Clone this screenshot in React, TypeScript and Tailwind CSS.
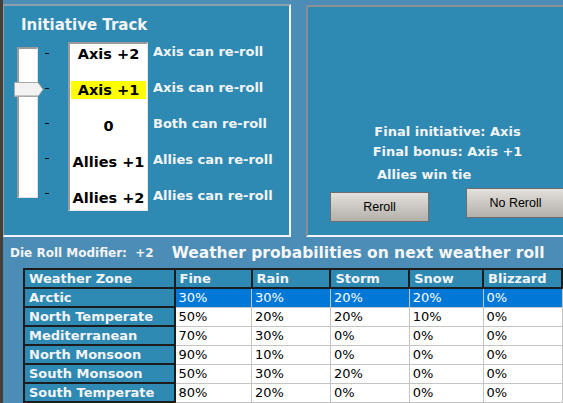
import React from "react";

const F = { fontFamily: '"DejaVu Sans", Verdana, sans-serif' };
const BTN = { fontFamily: '"Liberation Sans", Arial, sans-serif' };

const levels = [
  { name: "Axis +2", label: "Axis can re-roll" },
  { name: "Axis +1", label: "Axis can re-roll", sel: true },
  { name: "0", label: "Both can re-roll" },
  { name: "Allies +1", label: "Allies can re-roll" },
  { name: "Allies +2", label: "Allies can re-roll" },
];

const rows = [
  ["Arctic", "30%", "30%", "20%", "20%", "0%"],
  ["North Temperate", "50%", "20%", "20%", "10%", "0%"],
  ["Mediterranean", "70%", "30%", "0%", "0%", "0%"],
  ["North Monsoon", "90%", "10%", "0%", "0%", "0%"],
  ["South Monsoon", "50%", "30%", "20%", "0%", "0%"],
  ["South Temperate", "80%", "20%", "0%", "0%", "0%"],
];

const headers = ["Weather Zone", "Fine", "Rain", "Storm", "Snow", "Blizzard"];
const widths = ["w-[152px]", "w-[80px]", "w-[82px]", "w-[81px]", "w-[76px]", "w-[80px]"];

function Slider() {
  return (
    <div className="relative w-[36px] h-[170px] mt-[5px] ml-[10px]">
      <div className="absolute left-[3px] top-0 w-[21px] h-[151px] bg-white border-l-2 border-t-2 border-[#9a9a9a] border-r border-b border-r-[#e0e0e0] border-b-[#e0e0e0]" />
      <div className="absolute left-[31px] top-[6px] flex flex-col gap-[34px]">
        {[0, 1, 2, 3, 4].map((i) => (
          <div key={i} className="w-[4px] h-[1px] bg-[#111]" />
        ))}
      </div>
      <svg className="absolute left-0 top-[35px]" width="30" height="15" viewBox="0 0 30 15">
        <path d="M0.5 0.5 H24 L29 7.5 L24 14.5 H0.5 Z" fill="#f2f2f2" stroke="#a8a8a8" />
        <path d="M1 13.5 H24" stroke="#c8c8c8" />
      </svg>
    </div>
  );
}

export default function App() {
  return (
    <div className="w-[563px] h-[403px] overflow-hidden bg-[#4b8db6] flex" style={F}>
      <div className="w-[3px] h-full bg-[#453f35] shrink-0" />
      <div className="flex flex-col flex-1 min-w-0">
        {/* top */}
        <div className="flex pt-[4px] h-[237px] shrink-0">
          <div className="w-[288px] h-[233px] shrink-0 bg-[#2e89b3] border-t-2 border-l border-[#8aa0ad] border-r-2 border-b-2 border-r-[#f4f4f4] border-b-[#f4f4f4] flex flex-col">
            <div className="text-[15px] font-bold text-[#f4f4f4] pl-[17px] pt-[10px] leading-[18px] whitespace-nowrap">Initiative Track</div>
            <div className="flex mt-[8px]">
              <Slider />
              <div className="ml-[18px] w-[80px] h-[169px] bg-white border-l-2 border-t-2 border-[#9a9a9a] border-r border-b border-r-[#e8e8e8] border-b-[#e8e8e8] pt-[1px] flex flex-col gap-[18px] px-[1px]">
                {levels.map((l) => (
                  <div
                    key={l.name}
                    className={`h-[18px] flex items-center justify-center text-[14.5px] font-bold text-black leading-none whitespace-nowrap ${l.sel ? "bg-[#ffff00]" : ""}`}
                  >
                    {l.name}
                  </div>
                ))}
              </div>
              <div className="ml-[5px] pt-[1px] flex flex-col gap-[18px]">
                {levels.map((l, i) => (
                  <div key={i} className="h-[18px] flex items-center text-[13px] font-bold text-[#f4f4f4] leading-none whitespace-nowrap -mt-[1px] mb-[1px]">
                    {l.label}
                  </div>
                ))}
              </div>
            </div>
          </div>
          <div className="ml-[15px] mt-[1px] flex-1 h-[232px] bg-[#2e89b3] border-t-2 border-l-2 border-[#8a8f92] border-b-2 border-b-[#f4f4f4] relative">
            <div className="absolute left-[68px] top-[115px] w-[143px] flex flex-col items-center text-[13px] font-bold text-[#f4f4f4] leading-[20px] whitespace-nowrap">
              <div>Final initiative: Axis</div>
              <div>Final bonus: Axis +1</div>
            </div>
            <div className="absolute left-[69px] top-[158px] text-[13px] font-bold text-[#f4f4f4] leading-[20px] whitespace-nowrap">Allies win tie</div>
            <button style={BTN} className="absolute left-[22px] top-[185px] w-[99px] h-[30px] border border-[#6e6e6e] bg-gradient-to-b from-[#e4e1dc] to-[#b3afa9] text-[12.5px] text-black">
              Reroll
            </button>
            <button style={BTN} className="absolute left-[158px] top-[181px] w-[99px] h-[30px] border border-[#6e6e6e] bg-gradient-to-b from-[#e4e1dc] to-[#b3afa9] text-[12.5px] text-black">
              No Reroll
            </button>
          </div>
        </div>
        {/* modifier line */}
        <div className="flex items-end h-[27px] pl-[7px] whitespace-nowrap">
          <div className="text-[12px] font-bold text-[#f4f4f4] leading-[20px] pb-[1px]">Die Roll Modifier:&nbsp; +2</div>
          <div className="ml-[18px] text-[15.5px] font-bold text-[#f6f6f6] leading-[22px]">Weather probabilities on next weather roll</div>
        </div>
        {/* table */}
        <div className="pl-[20px] pt-[4px]">
          <table className="border-collapse table-fixed text-[13px] leading-[17px]">
            <thead>
              <tr>
                {headers.map((h, i) => (
                  <th
                    key={h}
                    className={`${widths[i]} h-[19px] p-0 pl-[4px] text-left font-bold text-[#f4f4f4] bg-[#2e89b3] border-2 border-[#1c1c1c] whitespace-nowrap`}
                  >
                    {h}
                  </th>
                ))}
              </tr>
            </thead>
            <tbody>
              {rows.map((r, ri) => (
                <tr key={r[0]}>
                  {r.map((c, ci) =>
                    ci === 0 ? (
                      <td
                        key={ci}
                        className="h-[19px] p-0 pl-[4px] font-bold text-[#f4f4f4] bg-[#2e89b3] border-2 border-[#1c1c1c] whitespace-nowrap"
                      >
                        {c}
                      </td>
                    ) : (
                      <td
                        key={ci}
                        className={`h-[19px] p-0 pl-[3px] border border-[#c4c4c4] whitespace-nowrap ${ri === 0 ? "bg-[#0078d7] text-white" : "bg-white text-black"}`}
                      >
                        {c}
                      </td>
                    )
                  )}
                </tr>
              ))}
            </tbody>
          </table>
        </div>
      </div>
    </div>
  );
}
